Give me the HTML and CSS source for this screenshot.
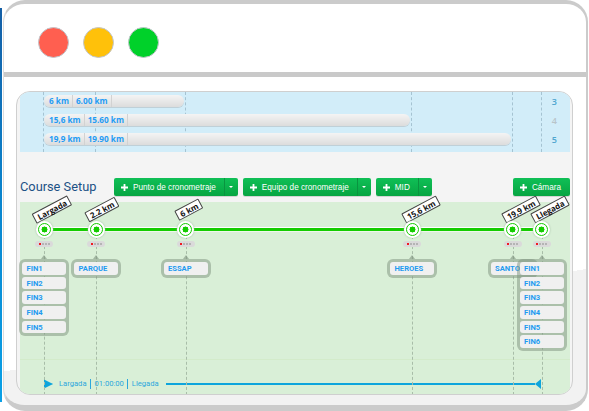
FILE: index.html
```html
<!DOCTYPE html>
<html lang="es">
<head>
<meta charset="utf-8">
<title>Course Setup</title>
<link rel="stylesheet" href="styles.css">
</head>
<body>
<div class="stripe"></div>
<div class="frame">
  <header class="titlebar">
    <span class="light light-red"></span>
    <span class="light light-amber"></span>
    <span class="light light-green"></span>
  </header>
  <main class="content">
    <section class="panel">
      <div class="schedule">
        <i class="guide" style="left:23px"></i>
        <i class="guide" style="left:75px"></i>
        <i class="guide" style="left:165px"></i>
        <i class="guide" style="left:391px"></i>
        <i class="guide" style="left:492px"></i>
        <i class="guide" style="left:521px"></i>
        <div class="row">
          <div class="bar" style="width:140px"><span class="seg">6 km</span><span class="seg">6.00 km</span></div>
          <span class="num">3</span>
        </div>
        <div class="row">
          <div class="bar" style="width:366px"><span class="seg">15,6 km</span><span class="seg">15.60 km</span></div>
          <span class="num num-off">4</span>
        </div>
        <div class="row">
          <div class="bar" style="width:467px"><span class="seg">19,9 km</span><span class="seg">19.90 km</span></div>
          <span class="num">5</span>
        </div>
      </div>
      <div class="toolbar">
        <h2 class="title">Course Setup</h2>
        <div class="btn"><span class="btn-main"><svg class="plus" viewBox="0 0 7 7"><path d="M2.6 0h1.8v2.6H7v1.8H4.4V7H2.6V4.4H0V2.6h2.6z"/></svg>Punto de cronometraje</span><span class="btn-caret"></span></div>
        <div class="btn"><span class="btn-main"><svg class="plus" viewBox="0 0 7 7"><path d="M2.6 0h1.8v2.6H7v1.8H4.4V7H2.6V4.4H0V2.6h2.6z"/></svg>Equipo de cronometraje</span><span class="btn-caret"></span></div>
        <div class="btn"><span class="btn-main"><svg class="plus" viewBox="0 0 7 7"><path d="M2.6 0h1.8v2.6H7v1.8H4.4V7H2.6V4.4H0V2.6h2.6z"/></svg>MID</span><span class="btn-caret"></span></div>
        <div class="btn btn-end"><span class="btn-main"><svg class="plus" viewBox="0 0 7 7"><path d="M2.6 0h1.8v2.6H7v1.8H4.4V7H2.6V4.4H0V2.6h2.6z"/></svg>Cámara</span></div>
      </div>
      <div class="course">
        <div class="canvas">
          <div class="track"></div>

          <div class="stop" style="left:24px">
            <i class="stem"></i>
            <span class="tag" style="left:8px">Largada</span>
            <span class="ring"><b></b></span>
            <span class="chip"><b class="on"></b><b></b><b></b><b></b></span>
            <div class="bubble">
              <span class="item">FIN1</span><span class="item">FIN2</span><span class="item">FIN3</span><span class="item">FIN4</span><span class="item">FIN5</span>
            </div>
          </div>

          <div class="stop" style="left:76px">
            <i class="stem"></i>
            <span class="tag" style="left:6px">2.2 km</span>
            <span class="ring"><b></b></span>
            <span class="chip"><b class="on"></b><b></b><b></b><b></b></span>
            <div class="bubble"><span class="item">PARQUE</span></div>
          </div>

          <div class="stop" style="left:165.5px">
            <i class="stem"></i>
            <span class="tag" style="left:3px">6 km</span>
            <span class="ring"><b></b></span>
            <span class="chip"><b class="on"></b><b></b><b></b><b></b></span>
            <div class="bubble"><span class="item">ESSAP</span></div>
          </div>

          <div class="stop" style="left:392px">
            <i class="stem"></i>
            <span class="tag" style="left:9px">15,6 km</span>
            <span class="ring"><b></b></span>
            <span class="chip"><b class="on"></b><b></b><b></b><b></b></span>
            <div class="bubble"><span class="item">HEROES</span></div>
          </div>

          <div class="stop" style="left:492.5px">
            <i class="stem"></i>
            <span class="tag" style="left:8px">19,9 km</span>
            <span class="ring"><b></b></span>
            <span class="chip"><b class="on"></b><b></b><b></b><b></b></span>
            <div class="bubble"><span class="item">SANTO</span></div>
          </div>

          <div class="stop" style="left:521.5px">
            <i class="stem"></i>
            <span class="tag" style="left:8px">Llegada</span>
            <span class="ring"><b></b></span>
            <span class="chip"><b class="on"></b><b></b><b></b><b></b></span>
            <div class="bubble">
              <span class="item">FIN1</span><span class="item">FIN2</span><span class="item">FIN3</span><span class="item">FIN4</span><span class="item">FIN5</span><span class="item">FIN6</span>
            </div>
          </div>
        </div>
        <div class="timeline">
          <svg class="flag" viewBox="0 0 9 10"><path d="M0 0h1v3.6L9 5 1 6.4V10H0z"/><path d="M1 1l8 4-8 4z"/></svg>
          <span class="tl-text">Largada</span>
          <span class="tl-text tl-sep">01:00:00</span>
          <span class="tl-text tl-sep">Llegada</span>
          <span class="tl-line"></span>
          <svg class="flag-end" viewBox="0 0 6 10"><path d="M6 0v10L0 5z"/></svg>
        </div>
      </div>
    </section>
  </main>
</div>
</body>
</html>
```

FILE: styles.css
```css
* { box-sizing: border-box; }
html, body { margin: 0; padding: 0; }
body {
  width: 589px;
  height: 411px;
  overflow: hidden;
  display: flex;
  background: #fff;
  font-family: "Open Sans", "Liberation Sans", sans-serif;
}
.stripe {
  width: 2px;
  margin: 8px 1px 9px 0;
  background: linear-gradient(#155fa6, #0a86cf 50%, #0aa0e6);
  flex: none;
}
.frame {
  width: 585px;
  height: 411px;
  flex: none;
  border: solid #cbcbcb;
  border-width: 4px 2px 6px 1px;
  border-left-color: #dcdcdc;
  border-radius: 22px;
  background: linear-gradient(170deg, #fff 362px, #f2f2f2 362px);
  display: flex;
  flex-direction: column;
}
.titlebar {
  height: 73px;
  flex: none;
  border-bottom: 5px solid #c9c9c9;
  display: flex;
  align-items: center;
  gap: 14px;
  padding: 8px 0 0 34px;
}
.light {
  width: 31px;
  height: 31px;
  border-radius: 50%;
  border: 1px solid #c2c6cc;
}
.light-red { background: #ff5f50; }
.light-amber { background: #ffc10a; }
.light-green { background: #00d12a; }

.content {
  flex: 1;
  padding: 14px 12px 0;
  min-height: 0;
}
.panel {
  width: 557px;
  height: 304px;
  border: 1px solid #cfcfcf;
  border-radius: 14px;
  background: #f4f4f4;
  padding: 0 2px 0 3px;
  display: flex;
  flex-direction: column;
  overflow: hidden;
}

.schedule {
  position: relative;
  height: 60px;
  flex: none;
  background: #d2edf9;
  padding: 3px 0 0 24px;
  display: flex;
  flex-direction: column;
  gap: 7px;
}
.guide {
  position: absolute;
  top: 0;
  bottom: 0;
  border-left: 1px dashed #a5c3d2;
}
.row {
  position: relative;
  height: 12px;
  display: flex;
  justify-content: space-between;
  align-items: center;
  padding-right: 13px;
}
.bar {
  height: 12px;
  border-radius: 6px;
  background: linear-gradient(#f4f4f4, #dcdcdc);
  box-shadow: 0 1px 0 #bfd0d8;
  display: flex;
}
.seg {
  font-size: 8.2px;
  font-weight: 700;
  line-height: 12px;
  color: #1f9cf5;
  padding: 0 3px;
  border-right: 1px solid #d2d2d2;
  white-space: nowrap;
}
.seg:first-child { padding-left: 5px; }
.num {
  font-size: 9px;
  font-weight: 600;
  color: #4fa6cf;
}
.num-off { color: #b9c4c9; }

.toolbar {
  height: 50px;
  flex: none;
  display: flex;
  align-items: flex-start;
  padding-top: 26px;
  gap: 5px;
}
.title {
  margin: 0 13px 0 0;
  font-family: Roboto, "Open Sans", sans-serif;
  font-size: 12.8px;
  line-height: 18px;
  font-weight: 400;
  color: #1c5185;
  white-space: nowrap;
  width: 76px;
}
.btn {
  height: 18px;
  display: flex;
  border-radius: 2px;
  background: linear-gradient(#10bf56, #07a542);
  color: #fff;
  font-family: "Liberation Sans", Arial, sans-serif;
  font-size: 8.2px;
  line-height: 17px;
  white-space: nowrap;
  box-shadow: 0 1px 0 #d4d4d4;
}
.btn-end { margin-left: auto; }
.btn-end .btn-main { padding-right: 9px; }
.btn-main {
  display: flex;
  align-items: center;
  gap: 5px;
  padding: 0 8px 0 7px;
}
.plus { width: 7px; height: 7px; fill: #fff; flex: none; }
.btn-caret {
  width: 14px;
  border-left: 1px solid #0a9440;
  position: relative;
}
.btn-caret::after {
  content: "";
  position: absolute;
  left: 4px;
  top: 8px;
  border: 2px solid transparent;
  border-top: 2.4px solid #fff;
  border-bottom: 0;
}

.course {
  flex: 1;
  min-height: 0;
  background: #d9efd7;
  display: flex;
  flex-direction: column;
}
.canvas {
  position: relative;
  height: 158px;
  flex: none;
  border-bottom: 1px solid #d3ebca;
}
.track {
  position: absolute;
  left: 24px;
  top: 25px;
  width: 497px;
  height: 5px;
  background: #14cc00;
  border-top: 1px solid #fff;
  border-bottom: 1px solid #eef8ea;
}
.stop {
  position: absolute;
  top: 0;
  width: 0;
  display: flex;
  flex-direction: column;
  align-items: center;
}
.stem {
  position: absolute;
  top: 34px;
  left: 0;
  height: 159px;
  border-left: 1px dashed #a8bda8;
}
.tag {
  position: absolute;
  top: 2px;
  height: 11px;
  padding: 0 3px;
  background: #fff;
  border: 1px solid #444;
  border-radius: 1px;
  font-size: 8px;
  font-weight: 700;
  line-height: 9px;
  color: #111;
  white-space: nowrap;
  transform: translateX(-50%) rotate(-28deg);
}
.ring {
  position: relative;
  flex: none;
  margin-top: 19px;
  width: 17px;
  height: 17px;
  border-radius: 50%;
  background: #fff;
  box-shadow: 0 0 2px #9fb89f;
  display: flex;
  align-items: center;
  justify-content: center;
}
.ring b {
  width: 13px;
  height: 13px;
  border-radius: 50%;
  border: 1.5px solid #14cc00;
  background: radial-gradient(circle, #14cc00 2.8px, #fff 3.2px);
}
.chip {
  position: relative;
  flex: none;
  margin-top: 3px;
  width: 18px;
  height: 6px;
  border-radius: 3px;
  background: #dadada;
  display: flex;
  align-items: center;
  justify-content: center;
  gap: 1px;
}
.chip b {
  width: 2px;
  height: 2px;
  background: #b4b4b4;
}
.chip b.on { background: #f01a22; }
.bubble {
  position: relative;
  flex: none;
  margin-top: 12px;
  width: 50px;
  padding: 3px;
  border-radius: 6px;
  background: rgba(125, 145, 125, 0.5);
  display: flex;
  flex-direction: column;
  gap: 2px;
}
.bubble::before {
  content: "";
  position: absolute;
  left: 50%;
  top: -4px;
  margin-left: -3px;
  border: 3px solid transparent;
  border-top: 0;
  border-bottom: 4px solid rgba(125, 145, 125, 0.6);
}
.item {
  height: 12.7px;
  padding: 0 4.5px;
  border-radius: 3px;
  background: #f0f0f0;
  font-family: Roboto, "Open Sans", sans-serif;
  font-size: 7.6px;
  font-weight: 700;
  line-height: 13px;
  color: #1f9bf0;
  white-space: nowrap;
  overflow: hidden;
}

.timeline {
  flex: 1;
  display: flex;
  align-items: center;
  padding: 14px 29px 0 24px;
  color: #2ca7dd;
}
.flag { width: 9px; height: 10px; fill: #0ea5dc; flex: none; margin-right: 6px; }
.flag-end { width: 6px; height: 10px; fill: #0ea5dc; flex: none; }
.tl-text {
  font-family: Roboto, "Open Sans", sans-serif;
  font-size: 7.6px;
  line-height: 10px;
  padding-right: 3px;
  white-space: nowrap;
}
.tl-sep {
  border-left: 1px solid #2ca7dd;
  padding-left: 4px;
}
.tl-line {
  flex: 1;
  height: 2px;
  margin-left: 4px;
  background: #0ea5dc;
}
```
